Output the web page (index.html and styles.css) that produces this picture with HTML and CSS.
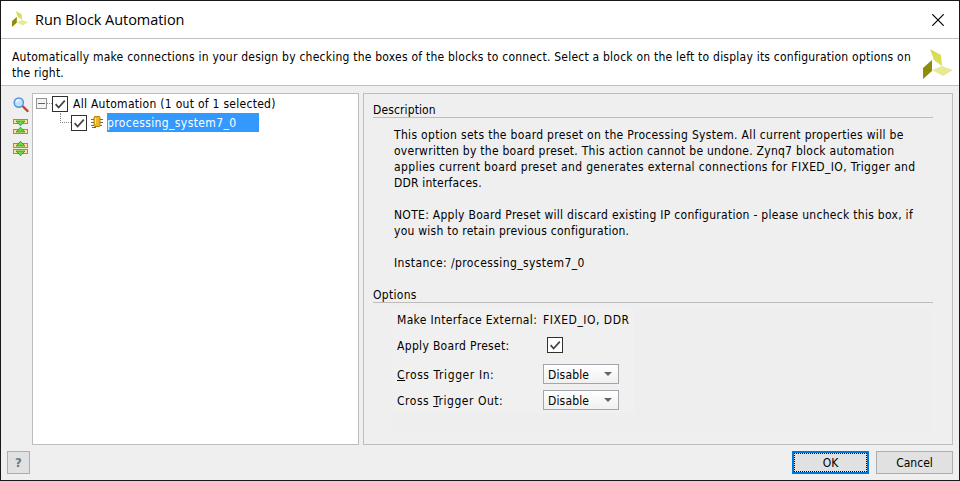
FILE: index.html
```html
<!DOCTYPE html>
<html lang="en">
<head>
<meta charset="utf-8">
<title>Run Block Automation</title>
<link rel="stylesheet" href="styles.css">
</head>
<body>
<svg class="defs" width="0" height="0" aria-hidden="true">
  <symbol id="brand" viewBox="0 0 30 30">
    <path fill="#d9dd55" d="M7 0l11 6 1 11-8-6z"/>
    <path fill="#8d8c0b" d="M0 19l9-8v11l-9 8z"/>
    <path fill="#e7e994" d="M9 21l10-4 11 4-10 6z"/>
  </symbol>
  <symbol id="check" viewBox="0 0 16 16">
    <path d="M3 8.2l3.400 3.800L13.500 4.200" fill="none" stroke="#404040" stroke-width="1.9"/>
  </symbol>
  <symbol id="bar" viewBox="0 0 15 5">
    <rect x=".5" y=".5" width="14" height="4" fill="#ffe3a0" stroke="#c08424"/>
  </symbol>
</svg>
<div class="window">
  <header class="titlebar">
    <svg class="small-logo"><use href="#brand"/></svg>
    <h1>Run Block Automation</h1>
    <svg class="close" viewBox="0 0 12 12"><path d="M.3.3l11.4 11.4M11.7.3L.3 11.7" stroke="#000" stroke-width="1.2"/></svg>
  </header>
  <section class="intro">
    <p><span class="i1">Automatically make connections in your design by checking the boxes of the blocks to connect. Select a block on the left to display its configuration options on</span><br><span class="i2">the right.</span></p>
    <svg class="big-logo"><use href="#brand"/></svg>
  </section>
  <main>
    <nav class="tools">
      <svg width="16" height="16" viewBox="0 0 16 16"><path d="M10 9.500l4.500 4.500" stroke="#c8402c" stroke-width="2.4" stroke-linecap="round"/><circle cx="5.8" cy="5.6" r="4.6" fill="#bfe3fb" stroke="#5795dc" stroke-width="1.5"/><path d="M3.400 5a3 3 0 0 1 3-2" fill="none" stroke="#fff" stroke-width="1.3"/></svg>
      <svg width="15" height="15" viewBox="0 0 15 15"><use href="#bar" width="15" height="5"/><use href="#bar" y="10" width="15" height="5"/><path d="M3 2h9L7.500 6.800zM3 13h9L7.500 8.200z" fill="#5fdc3c" stroke="#259b1b" stroke-width=".8"/></svg>
      <svg width="15" height="15" viewBox="0 0 15 15"><use href="#bar" y="2" width="15" height="5"/><use href="#bar" y="8" width="15" height="5"/><path d="M3 5h9L7.500.3zM3 10h9l-4.500 4.700z" fill="#5fdc3c" stroke="#259b1b" stroke-width=".8"/></svg>
    </nav>
    <section class="tree">
      <div class="row">
        <svg width="11" height="11" viewBox="0 0 11 11"><rect x=".5" y=".5" width="10" height="10" fill="#f3f3f3" stroke="#929292"/><path d="M2 5.500h7" stroke="#3d63a8"/></svg>
        <i class="dots"></i>
        <span class="box"><svg><use href="#check"/></svg></span>
        <span class="t1">All Automation (1 out of 1 selected)</span>
      </div>
      <div class="row child">
        <i class="elbow"></i>
        <span class="box"><svg><use href="#check"/></svg></span>
        <svg class="chip" width="12" height="13" viewBox="0 0 12 13"><path d="M0 3.500h3M0 6.500h3M0 9.500h3M9 3.500h3M9 6.500h3M9 9.500h2M1 11.500h4" stroke="#666"/><rect x="3" y=".5" width="6" height="10" rx="1" fill="#efb624" stroke="#b8800c"/><path d="M4.500 2v6" stroke="#ffe58a"/></svg>
        <span class="selected"><span class="t2">processing_system7_0</span></span>
      </div>
    </section>
    <section class="details">
      <h2><span class="h-desc">Description</span></h2>
      <div class="description">
        <p><span class="d1">This option sets the board preset on the Processing System. All current properties will be</span><br><span class="d2">overwritten by the board preset. This action cannot be undone. Zynq7 block automation</span><br><span class="d3">applies current board preset and generates external connections for FIXED_IO, Trigger and</span><br><span class="d4">DDR interfaces.</span></p>
        <p><span class="d5">NOTE: Apply Board Preset will discard existing IP configuration - please uncheck this box, if</span><br><span class="d6">you wish to retain previous configuration.</span></p>
        <p><span class="d7">Instance: /processing_system7_0</span></p>
      </div>
      <h2><span class="h-opt">Options</span></h2>
      <div class="options">
        <div class="fields">
          <span class="o1">Make Interface External:</span><span class="o2">FIXED_IO, DDR</span>
          <span class="label o3">Apply Board Preset:</span><span class="box preset"><svg><use href="#check"/></svg></span>
          <span class="label o4"><u>C</u>ross Trigger In:</span><span class="select"><span>Disable</span><i></i></span>
          <span class="label o5">Cross <u>T</u>rigger Out:</span><span class="select"><span>Disable</span><i></i></span>
        </div>
      </div>
    </section>
  </main>
  <footer>
    <button class="help">?</button>
    <button class="ok"><span>OK</span></button>
    <button class="cancel">Cancel</button>
  </footer>
</div>
</body>
</html>
```
FILE: styles.css
```css
* { box-sizing: border-box; }
body { margin: 0; background: #efefef; color: #000; font: 12px/16px "DejaVu Sans Condensed", "DejaVu Sans", sans-serif; font-stretch: condensed; }
p, h1, h2 { margin: 0; font-weight: normal; }
svg { display: block; flex: none; }
.defs { position: absolute; }
.window { width: 960px; height: 481px; border: 1px solid #18181b; display: flex; flex-direction: column; white-space: nowrap; }
.titlebar { height: 38px; background: #fff; border-bottom: 1px solid #c0c0c0; display: flex; align-items: center; padding: 0 15px 0 11px; }
.small-logo { width: 16px; height: 16px; margin-bottom: 2px; }
h1 { font: 14.5px/20px "Open Sans", sans-serif; margin-left: 7px; flex: 1; letter-spacing: -.05px; }
.close { width: 12px; height: 12px; }
.intro { height: 47px; background: #fff; border-bottom: 1px solid #c0c0c0; display: flex; justify-content: space-between; padding: 10px 6px 0 11px; }
.big-logo { width: 30px; height: 30px; }
main { height: 359px; display: flex; padding-top: 7px; }
.tools { width: 31px; padding: 4px 0 0 12px; display: flex; flex-direction: column; gap: 7px; }
.tools svg:first-child { margin-bottom: -1px; }
.tree { width: 327px; height: 352px; background: #fff; border: 1px solid #bdbdbd; padding: 0 3px; }
.row { height: 19px; display: flex; align-items: center; }
.dots { width: 5px; border-top: 1px dotted #888; }
.box { width: 16px; height: 16px; border: 1px solid #303030; background: #fff; flex: none; }
.box svg { width: 14px; height: 14px; }
.row .t1 { margin-left: 5px; }
.child { padding-left: 24px; }
.elbow { width: 11px; height: 10px; margin-top: -9px; border-left: 1px dotted #888; border-bottom: 1px dotted #888; }
.chip { margin: 0 4px; }
.selected { width: 152px; height: 19px; line-height: 20px; background: #3399ff; color: #fff; }
.details { width: 590px; height: 352px; margin-left: 4px; border: 1px solid #bdbdbd; padding: 8px 19px 0 9px; }
h2 { font: inherit; height: 16px; border-bottom: 1px solid #bdbdbd; line-height: 16px; }
.description { padding: 9px 0 0 21px; height: 169px; }
.description p { margin-bottom: 16px; }
.options { background: #eee; width: 538px; height: 125px; margin: 5px 0 0 20px; }
.fields { background: #f0f0f0; width: 241px; height: 105px; display: grid; grid-template-columns: 146px 1fr; grid-template-rows: 24px 26px 32px 20px; align-items: center; padding-left: 4px; }
.label { padding-top: 2px; }
.preset { margin-left: 4px; }
.select { width: 76px; height: 20px; border: 1px solid #a4a4ac; background: linear-gradient(#fff, #f0f0f0); display: flex; align-items: center; justify-content: space-between; padding: 0 6px 0 4px; }
.select span { padding-top: 2px; letter-spacing: .15px; }
.select i { border: 4px solid transparent; border-top-color: #666; border-bottom: 0; }
footer { display: flex; padding: 6px 6px 0; align-items: flex-start; }
button { height: 23px; border: 1px solid #adadad; background: #e1e1e1; padding: 0; font: inherit; color: #000; }
.help { width: 23px; margin-right: auto; color: #687780; font-weight: bold; font-size: 13px; }
.ok { width: 77px; border: 2px solid #0078d7; margin-right: 7px; }
.ok span { display: block; height: 19px; border: 1px dotted #000; line-height: 18px; }
.cancel { width: 77px; }

/* Line tracking */
.i1 { letter-spacing: .228px; }
.i2 { letter-spacing: .2px; }
.d1 { letter-spacing: .325px; }
.d2 { letter-spacing: .26px; }
.d3 { letter-spacing: .36px; }
.d4 { letter-spacing: .2px; }
.d5 { letter-spacing: .29px; }
.d6 { letter-spacing: .25px; }
.d7 { letter-spacing: .4px; }
.t1 { letter-spacing: .28px; }
.t2 { letter-spacing: .39px; }
.h-desc { letter-spacing: .12px; }
.h-opt { letter-spacing: .3px; }
.o1 { letter-spacing: .34px; }
.o2 { letter-spacing: .5px; }
.o3 { letter-spacing: .33px; }
.o4 { letter-spacing: .6px; }
.o5 { letter-spacing: .53px; }
```
